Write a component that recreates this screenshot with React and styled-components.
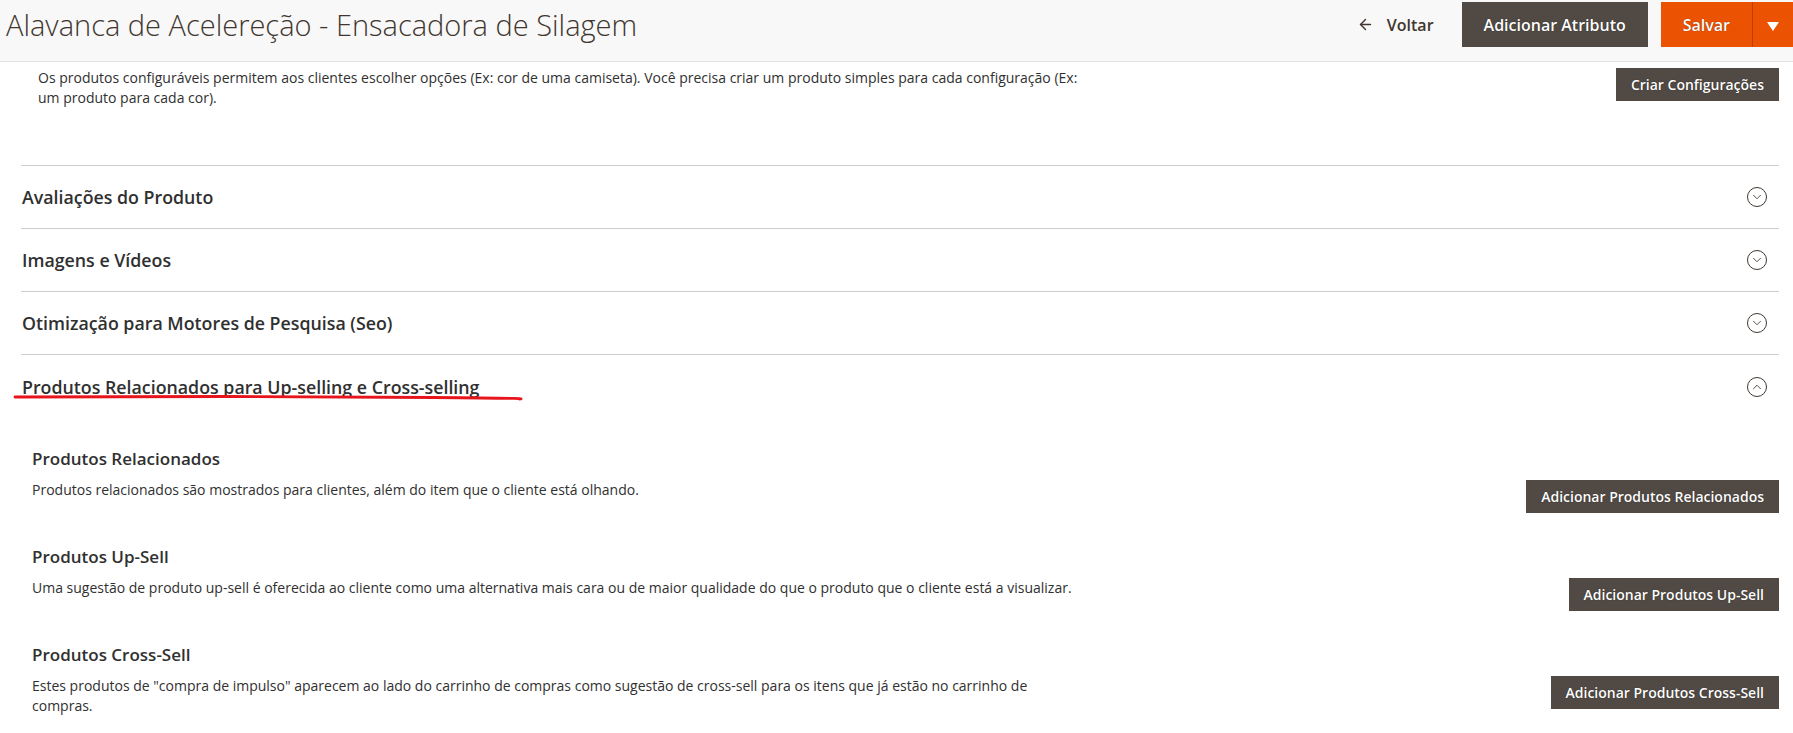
import styled, { createGlobalStyle } from "styled-components";
import { ArrowLeft, ChevronDown, ChevronUp } from "lucide-react";

const GlobalStyle = createGlobalStyle`
  body {
    margin: 0;
    background: #fff;
    font-family: "Open Sans", "Noto Sans", sans-serif;
    color: #303030;
  }
`;

const Header = styled.header`
  display: flex;
  align-items: flex-start;
  justify-content: space-between;
  height: 62px;
  padding: 2px 0 0 6px;
  box-sizing: border-box;
  background: #f8f8f8;
  border-bottom: 1px solid #e3e3e3;
`;

const Title = styled.h1`
  margin: 0;
  font-size: 29px;
  font-weight: 300;
  line-height: 45px;
  color: #41362f;
`;

const Actions = styled.div`
  display: flex;
  align-items: center;
  height: 45px;
`;

const BackLink = styled.a`
  display: flex;
  align-items: center;
  gap: 13px;
  margin-right: 28px;
  font-size: 16px;
  font-weight: 600;
  color: #41362f;
  cursor: pointer;
`;

const Button = styled.button`
  border: none;
  background: ${(p) => (p.$primary ? "#eb5202" : "#514943")};
  color: #fff;
  font-family: inherit;
  font-weight: 600;
  font-size: ${(p) => (p.$small ? "14px" : "16px")};
  height: ${(p) => (p.$small ? "33px" : "45px")};
  padding: 0 ${(p) => (p.$small ? "15px" : "22px")};
  text-shadow: 0 0 1px rgba(0, 0, 0, 0.6);
  cursor: pointer;
  white-space: nowrap;
`;

const SplitButton = styled.div`
  display: flex;
  margin-left: 13px;
  height: 45px;
  background: #eb5202;
`;

const SplitToggle = styled.button`
  width: 41px;
  border: none;
  border-left: 1px solid #b84000;
  background: #eb5202;
  display: flex;
  align-items: center;
  justify-content: center;
  cursor: pointer;
`;

const Triangle = styled.span`
  width: 0;
  height: 0;
  border-left: 6px solid transparent;
  border-right: 6px solid transparent;
  border-top: 9px solid #fff;
  margin-top: 3px;
`;

const Content = styled.main`
  padding: 0 14px 0 21px;
`;

const ConfigBlock = styled.div`
  display: flex;
  justify-content: space-between;
  align-items: flex-start;
  padding: 6px 0 57px 17px;
`;

const Text = styled.p`
  margin: 0;
  max-width: ${(p) => p.$wide || "1040px"};
  font-size: 14px;
  line-height: 20px;
  color: #303030;
`;

const Section = styled.section`
  border-top: 1px solid #cccccc;
`;

const SectionHead = styled.div`
  position: relative;
  display: flex;
  align-items: center;
  justify-content: space-between;
  height: ${(p) => (p.$open ? "63px" : "62px")};
  padding: 0 12px 0 1px;
`;

const SectionTitle = styled.h2`
  margin: 0;
  font-size: 17.8px;
  font-weight: 600;
  color: #303030;
`;

const Toggle = styled.span`
  width: 18px;
  height: 18px;
  border: 1px solid #41362f;
  border-radius: 50%;
  display: flex;
  align-items: center;
  justify-content: center;
  color: #41362f;
`;

const Scribble = styled.svg`
  position: absolute;
  left: -8px;
  top: 38px;
  pointer-events: none;
`;

const SectionBody = styled.div`
  padding: 30px 0 0 11px;
`;

const Block = styled.div`
  margin-bottom: 33px;
`;

const BlockTitle = styled.h3`
  margin: 0 0 10px;
  font-size: 17px;
  font-weight: 600;
  line-height: 22px;
  color: #303030;
`;

const BlockRow = styled.div`
  display: flex;
  justify-content: space-between;
  align-items: flex-start;
  gap: 40px;
`;

const sections = [
  "Avaliações do Produto",
  "Imagens e Vídeos",
  "Otimização para Motores de Pesquisa (Seo)",
];

const related = [
  {
    title: "Produtos Relacionados",
    text: "Produtos relacionados são mostrados para clientes, além do item que o cliente está olhando.",
    button: "Adicionar Produtos Relacionados",
  },
  {
    title: "Produtos Up-Sell",
    text: "Uma sugestão de produto up-sell é oferecida ao cliente como uma alternativa mais cara ou de maior qualidade do que o produto que o cliente está a visualizar.",
    button: "Adicionar Produtos Up-Sell",
  },
  {
    title: "Produtos Cross-Sell",
    text: 'Estes produtos de "compra de impulso" aparecem ao lado do carrinho de compras como sugestão de cross-sell para os itens que já estão no carrinho de compras.',
    button: "Adicionar Produtos Cross-Sell",
  },
];

const App = () => {
  return (
    <>
      <GlobalStyle />
      <Header>
        <Title>Alavanca de Acelereção - Ensacadora de Silagem</Title>
        <Actions>
          <BackLink>
            <ArrowLeft size={17} strokeWidth={2} />
            Voltar
          </BackLink>
          <Button>Adicionar Atributo</Button>
          <SplitButton>
            <Button $primary>Salvar</Button>
            <SplitToggle>
              <Triangle />
            </SplitToggle>
          </SplitButton>
        </Actions>
      </Header>
      <Content>
        <ConfigBlock>
          <Text>
            Os produtos configuráveis permitem aos clientes escolher opções (Ex: cor de uma
            camiseta). Você precisa criar um produto simples para cada configuração (Ex: um
            produto para cada cor).
          </Text>
          <Button $small>Criar Configurações</Button>
        </ConfigBlock>

        {sections.map((name) => (
          <Section key={name}>
            <SectionHead>
              <SectionTitle>{name}</SectionTitle>
              <Toggle>
                <ChevronDown size={14} strokeWidth={1.5} />
              </Toggle>
            </SectionHead>
          </Section>
        ))}

        <Section>
          <SectionHead $open>
            <SectionTitle>Produtos Relacionados para Up-selling e Cross-selling</SectionTitle>
            <Toggle>
              <ChevronUp size={14} strokeWidth={1.5} />
            </Toggle>
            <Scribble width="510" height="8" viewBox="0 0 510 8">
              <path
                d="M2 4 C 120 3, 300 3.5, 420 4.5 S 500 6, 507 6"
                stroke="#e8141b"
                strokeWidth="2.8"
                fill="none"
                strokeLinecap="round"
              />
            </Scribble>
          </SectionHead>
          <SectionBody>
            {related.map((item) => (
              <Block key={item.title}>
                <BlockTitle>{item.title}</BlockTitle>
                <BlockRow>
                  <Text $wide="1045px">{item.text}</Text>
                  <Button $small>{item.button}</Button>
                </BlockRow>
              </Block>
            ))}
          </SectionBody>
        </Section>
      </Content>
    </>
  );
};

export default App;
